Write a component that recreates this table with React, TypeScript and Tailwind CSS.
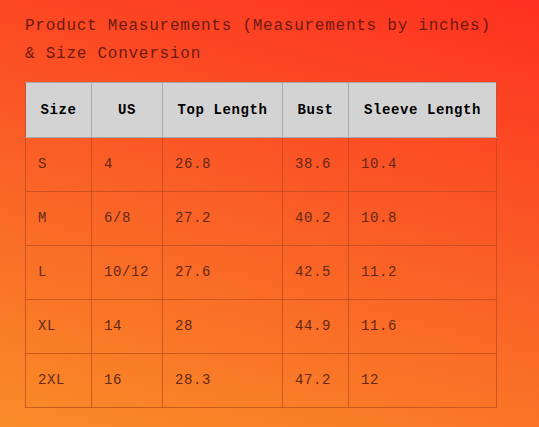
import React from 'react';

const rows = [
  ['S', '4', '26.8', '38.6', '10.4'],
  ['M', '6/8', '27.2', '40.2', '10.8'],
  ['L', '10/12', '27.6', '42.5', '11.2'],
  ['XL', '14', '28', '44.9', '11.6'],
  ['2XL', '16', '28.3', '47.2', '12'],
];

const headers = ['Size', 'US', 'Top Length', 'Bust', 'Sleeve Length'];
const widths = ['w-[66px]', 'w-[71px]', 'w-[120px]', 'w-[66px]', 'w-[148px]'];

export default function App() {
  return (
    <div
      className="w-[539px] h-[427px] bg-[linear-gradient(195deg,#fe3020_0%,#fa5a26_45%,#f98d28_100%)] px-[25px] pt-[12px]"
      style={{ fontFamily: '"Liberation Mono", "DejaVu Sans Mono", monospace' }}
    >
      <h1 className="text-[16px] leading-[28px] tracking-[0.75px] text-[#6e1a12] font-normal">
        Product Measurements (Measurements by inches)
        <br />& Size Conversion
      </h1>

      <table className="mt-[14px] w-[471px] table-fixed border-collapse">
        <colgroup>
          {widths.map((w, i) => (
            <col key={i} className={w} />
          ))}
        </colgroup>
        <thead>
          <tr className="h-[55px] bg-[#d3d3d3]">
            {headers.map((h) => (
              <th
                key={h}
                className="border border-[#a9a9a9] text-center text-[14px] font-bold tracking-[0.6px] text-black first:border-l-[#c9503a] last:border-r-[#c9503a]"
              >
                {h}
              </th>
            ))}
          </tr>
        </thead>
        <tbody>
          {rows.map((r) => (
            <tr key={r[0]} className="h-[54px]">
              {r.map((c, i) => (
                <td
                  key={i}
                  className="border border-[#b8481e]/70 px-[12px] text-left text-[14px] tracking-[0.6px] text-[#64281a]"
                >
                  {c}
                </td>
              ))}
            </tr>
          ))}
        </tbody>
      </table>
    </div>
  );
}
